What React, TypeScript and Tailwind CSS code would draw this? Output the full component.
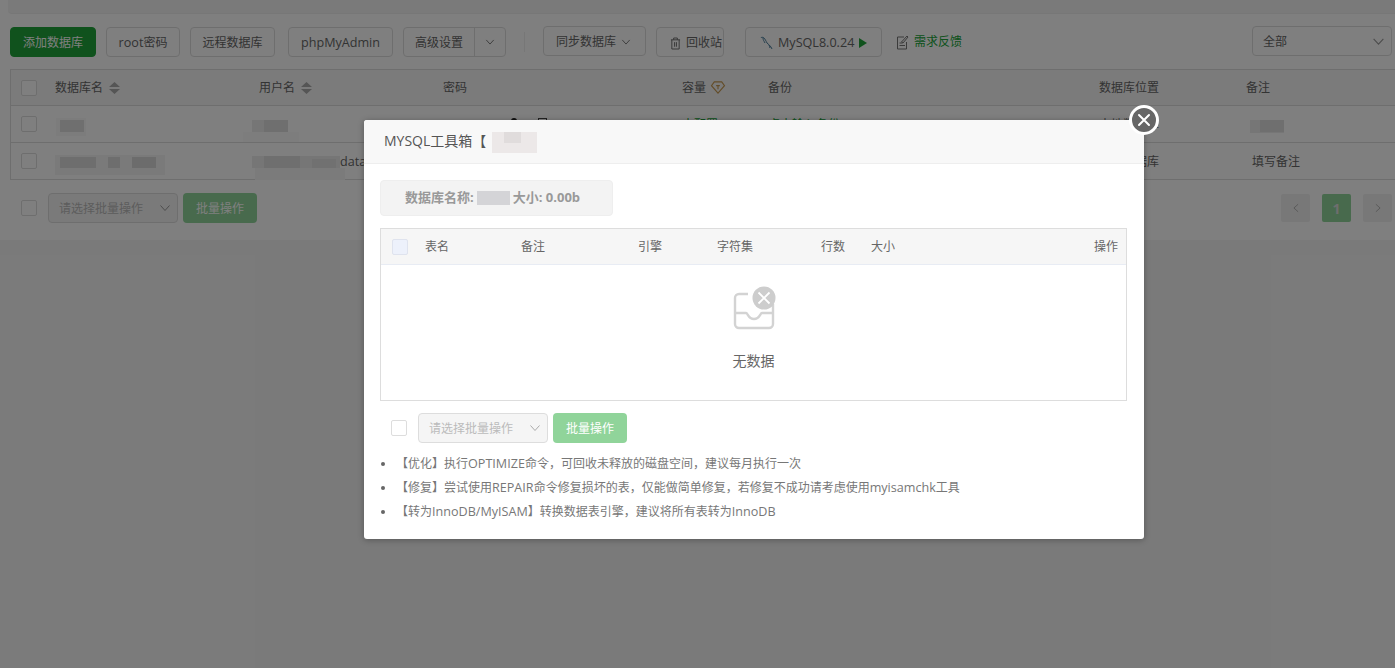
import React from "react";

const font = { fontFamily: '"Open Sans","Noto Sans CJK SC",sans-serif' };

function Chevron({ className = "" }: { className?: string }) {
  return (
    <svg viewBox="0 0 12 12" className={className} fill="none" stroke="currentColor" strokeWidth="1">
      <path d="M1.5 3.5 6 8.5l4.5-5" />
    </svg>
  );
}

function Sort() {
  return (
    <svg viewBox="0 0 11 12" className="ml-[6px] w-[11px] h-[12px]" fill="#aaa">
      <path d="M5.5 0 11 5H0zM0 7h11l-5.5 5z" />
    </svg>
  );
}

function L({ children }: { children: React.ReactNode }) {
  return <span className="text-[12.6px]">{children}</span>;
}

function Btn({ children, className = "" }: { children: React.ReactNode; className?: string }) {
  return (
    <div className={`h-[30px] pt-[2px] flex items-center justify-center border border-[#ddd] rounded-[4px] bg-white text-[12px] text-[#666] ${className}`}>
      {children}
    </div>
  );
}

function Check({ className = "" }: { className?: string }) {
  return <div className={`w-4 h-4 border border-[#ddd] rounded-[2px] bg-white shrink-0 ${className}`} />;
}

function Blur({ className }: { className: string }) {
  return <div className={`absolute ${className}`} />;
}

function Toolbar() {
  return (
    <div className="flex items-start pl-[10px] pt-[13px]">
      <Btn className="w-[86px] !bg-[#20a53a] !border-[#20a53a] !text-white">添加数据库</Btn>
      <Btn className="w-[74px] ml-[10px]"><L>root</L>密码</Btn>
      <Btn className="w-[85px] ml-[10px]">远程数据库</Btn>
      <Btn className="w-[105px] ml-[13px]"><L>phpMyAdmin</L></Btn>
      <div className="ml-[10px] w-[103px] h-[30px] flex border border-[#ddd] rounded-[4px] text-[12px] text-[#666]">
        <div className="w-[71px] pt-[2px] flex items-center justify-center border-r border-[#ddd]">高级设置</div>
        <div className="flex-1 flex items-center justify-center">
          <Chevron className="w-[10px] h-[10px]" />
        </div>
      </div>
      <div className="ml-[18px] w-px h-[20px] mt-[5px] bg-[#eee]" />
      <Btn className="w-[103px] ml-[18px] -mt-px gap-[5px] !justify-start pl-[12px]">
        同步数据库 <Chevron className="w-[10px] h-[10px]" />
      </Btn>
      <Btn className="w-[68px] ml-[10px] gap-[5px] !justify-start pl-[13px] whitespace-nowrap">
        <svg viewBox="0 0 12 14" className="w-[11px] h-[13px]" fill="none" stroke="#666" strokeWidth="1">
          <path d="M1 3h10M4 3V1h4v2M2 3v10h8V3M5 5.5v5M7 5.5v5" />
        </svg>
        回收站
      </Btn>
      <Btn className="w-[137px] ml-[21px] gap-[5px] !justify-start pl-[14px]">
        <svg viewBox="0 0 13 14" className="w-[13px] h-[14px]" fill="none" stroke="#4d7f9c" strokeWidth="1">
          <path d="M1 2c0-1 2-1 3 0s2 3 3 5c1 1 4 3 5 6M3 2c0 2 1 3 2 5M9 9c0 1 1 2 1 3" />
        </svg>
        <L>MySQL8.0.24</L>
        <svg viewBox="0 0 8 10" className="w-[8px] h-[10px]" fill="#20a53a">
          <path d="M0 0l8 5-8 5z" />
        </svg>
      </Btn>
      <div className="ml-[14px] h-[30px] pt-[2px] flex items-center gap-[5px] text-[12px] text-[#20a53a] -mt-px">
        <svg viewBox="0 0 13 15" className="w-[13px] h-[15px]" fill="none" stroke="#777" strokeWidth="1">
          <path d="M8 2H1.5v12h9V7M3.5 8h3M3.5 10.500h5.500M5.500 7l5.500-6 1 1-5 6z" />
        </svg>
        需求反馈
      </div>
      <div className="ml-[290px] -mt-px w-[140px] h-[30px] pt-[2px] flex items-center justify-between pl-[10px] pr-[6px] border border-[#ddd] rounded-[4px] text-[12px] text-[#666]">
        全部 <Chevron className="w-[13px] h-[13px] text-[#999] -mt-[2px]" />
      </div>
    </div>
  );
}

function Mosaic() {
  return (
    <>
      <Blur className="left-[56px] top-[118px] w-[30px] h-[18px] bg-[#f8f8f8]" />
      <Blur className="left-[60px] top-[120px] w-[24px] h-[12px] bg-[#dedede]" />
      <Blur className="left-[252px] top-[120px] w-[36px] h-[12px] bg-[#ececec]" />
      <Blur className="left-[264px] top-[120px] w-[24px] h-[12px] bg-[#dedede]" />
      <Blur className="left-[243px] top-[132px] w-[56px] h-[10px] bg-[#fbfbfb]" />
      <Blur className="left-[1250px] top-[120px] w-[34px] h-[13px] bg-[#ececec]" />
      <Blur className="left-[1260px] top-[120px] w-[24px] h-[12px] bg-[#dedede]" />
      <Blur className="left-[55px] top-[155px] w-[110px] h-[20px] bg-[#f4f4f4]" />
      <Blur className="left-[60px] top-[157px] w-[36px] h-[11px] bg-[#dcdcdc]" />
      <Blur className="left-[108px] top-[157px] w-[12px] h-[11px] bg-[#dcdcdc]" />
      <Blur className="left-[132px] top-[157px] w-[24px] h-[11px] bg-[#d8d8d8]" />
      <Blur className="left-[252px] top-[156px] w-[88px] h-[12px] bg-[#ececec]" />
      <Blur className="left-[264px] top-[156px] w-[36px] h-[12px] bg-[#dedede]" />
      <Blur className="left-[312px] top-[159px] w-[24px] h-[9px] bg-[#e2e2e2]" />
      <Blur className="left-[255px] top-[168px] w-[90px] h-[12px] bg-[#f6f6f6]" />
    </>
  );
}

function MainTable() {
  const cols = "grid grid-cols-[44px_204px_184px_239px_86px_331px_147px_1fr] items-center";
  return (
    <div className="mt-[12px] ml-[10px] border-y border-l border-[#ddd] text-[12px] text-[#666]">
      <div className={`${cols} h-[36px] bg-[#f6f6f6] border-b border-[#ddd]`}>
        <Check className="ml-[10px]" />
        <div className="flex items-center">数据库名<Sort /></div>
        <div className="flex items-center">用户名<Sort /></div>
        <div>密码</div>
        <div className="flex items-center">
          容量
          <svg viewBox="0 0 16 14" className="ml-[4px] w-[16px] h-[13px]" fill="none" stroke="#c79a52" strokeWidth="1.2">
            <path d="M4 1h8l3 4-7 8-7-8z" />
            <path d="M6 5h4M8 5v4" />
          </svg>
        </div>
        <div>备份</div>
        <div>数据库位置</div>
        <div>备注</div>
      </div>
      <div className={`${cols} h-[37px] pt-[2px] border-b border-[#ddd]`}>
        <Check className="ml-[10px] -mt-[2px]" />
        <div />
        <div />
        <div className="relative h-full">
          <div className="absolute left-[68px] top-[10px] w-[6px] h-[8px] rounded-full bg-[#222]" />
          <div className="absolute left-[95px] top-[10px] w-[9px] h-[10px] border border-[#444]" />
        </div>
        <div className="text-[#20a53a]">未配置</div>
        <div className="text-[#20a53a]">点击输入备份</div>
        <div>本地数据库</div>
        <div />
      </div>
      <div className={`${cols} h-[36px] pt-[2px]`}>
        <Check className="ml-[10px] -mt-[2px]" />
        <div className="pl-[2px]">r</div>
        <div className="pl-[81px]"><L>data</L></div>
        <div />
        <div />
        <div />
        <div>本地数据库</div>
        <div className="pl-[6px]">填写备注</div>
      </div>
    </div>
  );
}

function Footer() {
  return (
    <div className="mt-[13px] flex items-center pl-[21px] pr-[3px] text-[12px]">
      <Check />
      <div className="ml-[11px] w-[130px] h-[30px] pt-[2px] flex items-center justify-between pl-[10px] pr-[6px] border border-[#ddd] rounded-[4px] bg-[#f5f5f5] text-[#b9b9b9]">
        请选择批量操作 <Chevron className="w-[12px] h-[12px] text-[#999] -mt-[2px]" />
      </div>
      <div className="ml-[5px] w-[74px] h-[30px] pt-[2px] flex items-center justify-center rounded-[4px] bg-[#90d49a] text-white">批量操作</div>
      <div className="ml-auto flex gap-[12px]">
        <div className="w-[29px] h-[28px] flex items-center justify-center rounded-[2px] bg-[#f0f0f0] text-[#aaa]">
          <Chevron className="w-[10px] h-[10px] rotate-90" />
        </div>
        <div className="w-[29px] h-[28px] flex items-center justify-center rounded-[2px] bg-[#90d49a] text-[#ddd] font-bold text-[14px]">1</div>
        <div className="w-[29px] h-[28px] flex items-center justify-center rounded-[2px] bg-[#f0f0f0] text-[#aaa]">
          <Chevron className="w-[10px] h-[10px] -rotate-90" />
        </div>
      </div>
    </div>
  );
}

function EmptyIcon() {
  return (
    <svg viewBox="0 0 44 46" className="w-[44px] h-[46px]">
      <path d="M16 8H7a4 4 0 0 0-4 4v26a4 4 0 0 0 4 4h30a4 4 0 0 0 4-4V18" fill="none" stroke="#d3d3d3" strokeWidth="2.4" />
      <path d="M3 27h11c2 0 2 6 8 6s6-6 8-6h11" fill="none" stroke="#d3d3d3" strokeWidth="2.4" />
      <circle cx="32" cy="12" r="11.500" fill="#cdcdcd" />
      <path d="M26.500 6.500l11 11M37.500 6.500l-11 11" stroke="#fff" strokeWidth="1.8" />
    </svg>
  );
}

function Modal() {
  const cols = "grid grid-cols-[44px_96px_117px_79px_104px_50px_1fr_auto] items-center";
  return (
    <div className="absolute left-[364px] top-[120px] w-[780px] h-[419px] bg-white rounded-[3px] shadow-[0_1px_6px_rgba(0,0,0,0.3)]">
      <div className="h-[44px] bg-[#f8f8f8] border-b border-[#eee] pl-[20px] pb-[2px] flex items-center text-[14px] text-[#555] rounded-t-[3px] relative">
        MYSQL工具箱【
        <Blur className="left-[128px] top-[12px] w-[45px] h-[21px] bg-[#ece8e8]" />
        <Blur className="left-[140px] top-[12px] w-[17px] h-[11px] bg-[#e0dcdc]" />
      </div>
      <div className="px-[16px] pt-[16px]">
        <div className="w-[233px] h-[36px] bg-[#f3f3f3] border border-[#eee] rounded-[4px] pl-[24px] flex items-center text-[13px] font-bold text-[#999] whitespace-pre">
          数据库名称:
          <span className="inline-block w-[33px] h-[14px] mx-[3px] bg-[#d4d4d7]" />
          大小: 0.00b
        </div>
        <div className="mt-[12px] w-[747px] h-[173px] border border-[#ddd] text-[12px] text-[#666]">
          <div className={`${cols} h-[36px] bg-[#f6f6f6] border-b border-[#e8ecf4] pr-[8px]`}>
            <div className="w-4 h-4 ml-[11px] border border-[#dfe3ee] rounded-[2px] bg-[#edf1fb]" />
            <div>表名</div>
            <div>备注</div>
            <div>引擎</div>
            <div>字符集</div>
            <div>行数</div>
            <div>大小</div>
            <div>操作</div>
          </div>
          <div className="flex flex-col items-center pt-[21px]">
            <EmptyIcon />
            <div className="mt-[19px] text-[14px] text-[#666] leading-[20px]">无数据</div>
          </div>
        </div>
        <div className="mt-[12px] flex items-center text-[12px]">
          <Check className="ml-[11px]" />
          <div className="ml-[11px] w-[130px] h-[30px] pt-[2px] flex items-center justify-between pl-[10px] pr-[6px] border border-[#ddd] rounded-[4px] bg-[#f5f5f5] text-[#bbb]">
            请选择批量操作 <Chevron className="w-[12px] h-[12px] text-[#aaa] -mt-[2px]" />
          </div>
          <div className="ml-[5px] w-[74px] h-[30px] pt-[2px] flex items-center justify-center rounded-[4px] bg-[#90d49a] text-white">批量操作</div>
        </div>
        <ul className="mt-[9px] list-disc pl-[16px] text-[12px] leading-[24px] text-[#777] marker:text-[#666]">
          <li>【优化】执行<L>OPTIMIZE</L>命令，可回收未释放的磁盘空间，建议每月执行一次</li>
          <li>【修复】尝试使用<L>REPAIR</L>命令修复损坏的表，仅能做简单修复，若修复不成功请考虑使用<L>myisamchk</L>工具</li>
          <li>【转为<L>InnoDB/MyISAM</L>】转换数据表引擎，建议将所有表转为<L>InnoDB</L></li>
        </ul>
      </div>
      <div className="absolute -right-[15px] -top-[15px] w-[30px] h-[30px] rounded-full bg-[#666] border-[3px] border-white flex items-center justify-center">
        <svg viewBox="0 0 14 14" className="w-[14px] h-[14px]" stroke="#fff" strokeWidth="2" strokeLinecap="round">
          <path d="M2 2l10 10M12 2 2 12" />
        </svg>
      </div>
    </div>
  );
}

export default function App() {
  return (
    <div style={font} className="relative w-[1395px] h-[668px] overflow-hidden bg-[#f5f5f5]">
      <div className="h-[240px] bg-white">
        <div className="ml-[8px] h-[14px] bg-[#f5f5f5] border-b border-[#eee] rounded-bl-[4px]" />
        <Toolbar />
        <MainTable />
        <Footer />
      </div>
      <Mosaic />
      <div className="absolute inset-0 bg-black/50" />
      <Modal />
    </div>
  );
}
